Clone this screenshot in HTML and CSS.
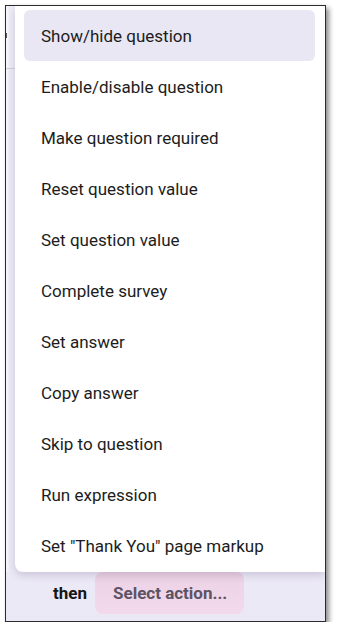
FILE: index.html
```html
<!DOCTYPE html>
<html>
<head>
<meta charset="utf-8">
<link rel="stylesheet" href="styles.css">
</head>
<body>
<div class="frame">
  <div class="page">
    <div class="header"><span class="clip"></span></div>
    <div class="spacer"></div>
    <div class="action-row">
      <span class="then">then</span>
      <button class="select">Select action...</button>
    </div>
  </div>
  <ul class="menu">
    <li class="item active">Show/hide question</li>
    <li class="item">Enable/disable question</li>
    <li class="item">Make question required</li>
    <li class="item">Reset question value</li>
    <li class="item">Set question value</li>
    <li class="item">Complete survey</li>
    <li class="item">Set answer</li>
    <li class="item">Copy answer</li>
    <li class="item">Skip to question</li>
    <li class="item">Run expression</li>
    <li class="item">Set "Thank You" page markup</li>
  </ul>
</div>
</body>
</html>
```

FILE: styles.css
```css
html, body {
  margin: 0;
  padding: 0;
  background: #ffffff;
  font-family: Roboto, "Liberation Sans", sans-serif;
}

.frame {
  position: relative;
  margin: 5px 0 0 5px;
  width: 319px;
  height: 615px;
  border: 1px solid #2b2b2b;
  box-shadow: 3px 3px 5px rgba(0, 0, 0, 0.45);
  overflow: hidden;
  background: linear-gradient(180deg, #f7f6fb 0%, #f1f0f8 60%, #ebe8f6 100%);
}

.page {
  display: flex;
  flex-direction: column;
  height: 100%;
}

.header {
  height: 62px;
  border-bottom: 1px solid #cfcfd6;
  background: linear-gradient(90deg, #f6f5fa 0px, #f6f5fa 2px, #eeedf6 3px, #eeedf6 9px);
  display: flex;
  align-items: flex-start;
}

.clip {
  display: block;
  width: 1px;
  height: 5px;
  margin-top: 27px;
  background: #555;
}

.spacer {
  flex: 1;
  background: linear-gradient(90deg, #f4f3fa 0px, #f4f3fa 2px, #edebf6 3px, #edebf6 9px);
}

.action-row {
  display: flex;
  align-items: flex-end;
  gap: 8px;
  padding: 0 0 7px 47px;
  height: 49px;
  box-sizing: border-box;
}

.then {
  font-size: 17px;
  font-weight: 700;
  color: #161616;
  line-height: 42px;
}

.select {
  height: 42px;
  padding: 0 17px 0 18px;
  border: none;
  border-radius: 8px;
  background: linear-gradient(180deg, #ecd2e4 0%, #f2d9ec 100%);
  font-family: Roboto, "Liberation Sans", sans-serif;
  font-size: 17px;
  font-weight: 700;
  color: #5d5363;
}

.menu {
  position: absolute;
  top: 0;
  left: 9px;
  right: 0;
  margin: 0;
  padding: 4px 10px 1px 9px;
  list-style: none;
  background: #ffffff;
  border-radius: 0 0 0 8px;
  box-shadow: 0 3px 8px rgba(60, 40, 90, 0.2);
}

.item {
  height: 51px;
  display: flex;
  align-items: center;
  padding-left: 17px;
  font-size: 17px;
  color: #1c1c1c;
  border-radius: 6px;
}

.item.active {
  background: #e9e7f4;
}
```
